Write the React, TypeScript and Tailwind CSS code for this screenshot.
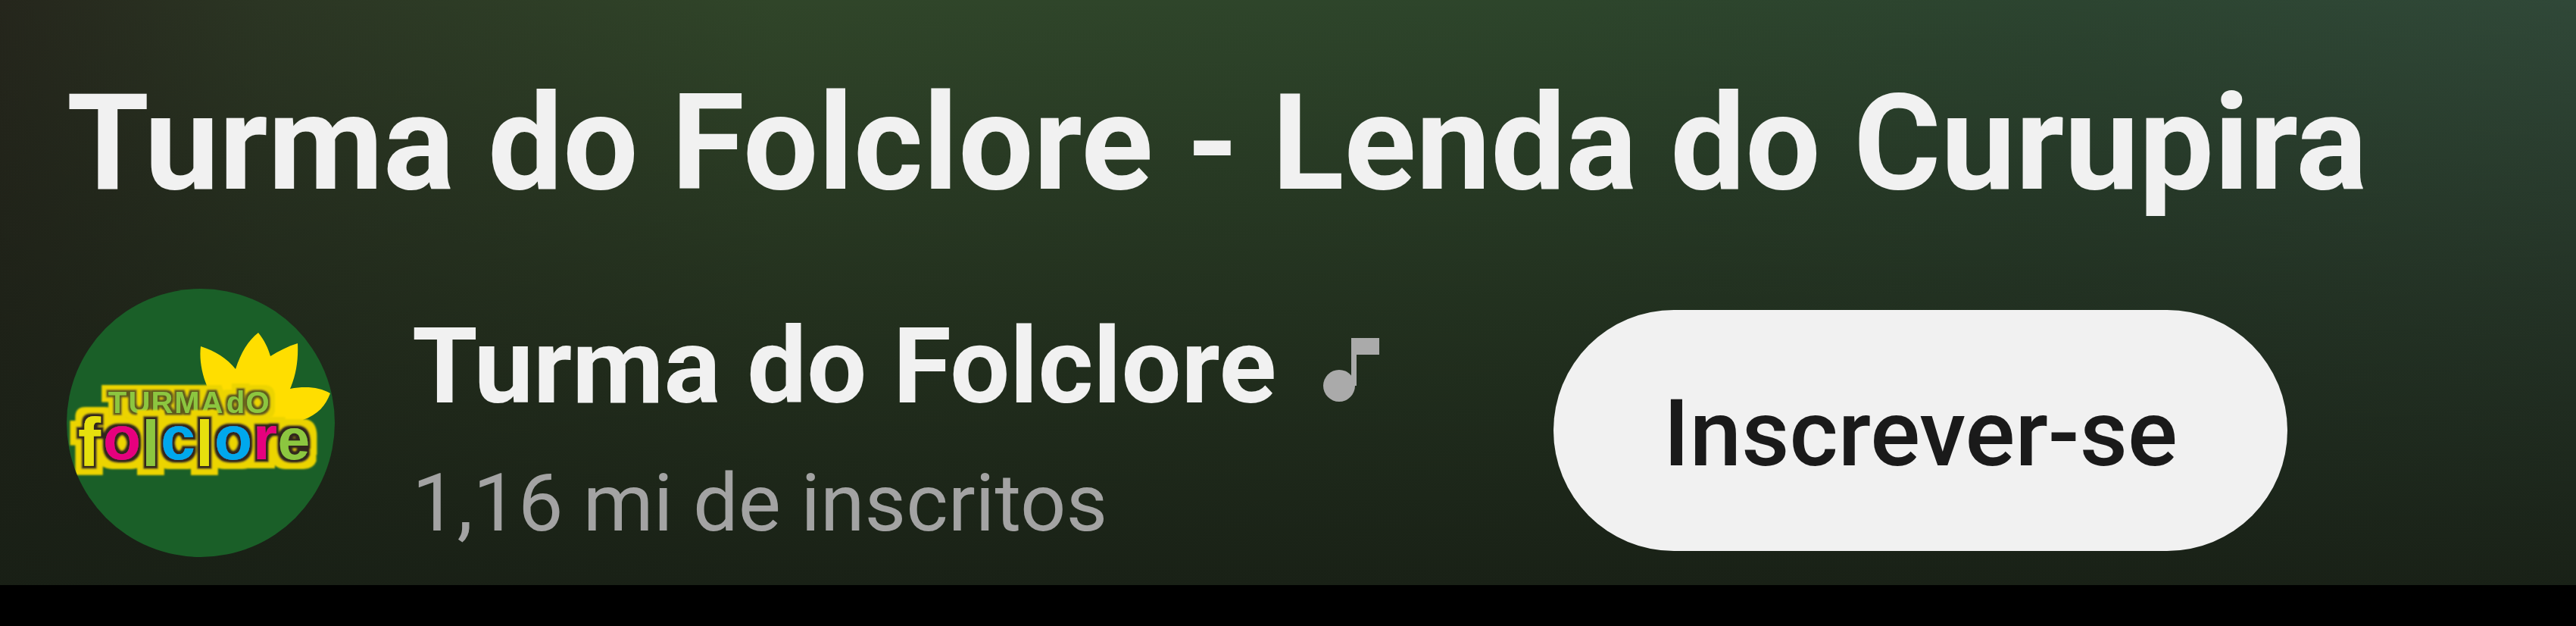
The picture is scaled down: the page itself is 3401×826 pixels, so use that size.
const bottomWord = [
  { c: "f", x: 30, y: 234, size: 90, fill: "#e6e010" },
  { c: "o", x: 73, y: 225, size: 82, fill: "#e6007e" },
  { c: "l", x: 111, y: 234, size: 86, fill: "#8cc63f" },
  { c: "c", x: 147, y: 225, size: 82, fill: "#00a8ec" },
  { c: "l", x: 182, y: 234, size: 86, fill: "#e6e010" },
  { c: "o", x: 220, y: 225, size: 82, fill: "#00a8ec" },
  { c: "r", x: 262, y: 225, size: 82, fill: "#e6007e" },
  { c: "e", x: 300, y: 225, size: 76, fill: "#8cc63f" },
];

function ChannelLogo() {
  return (
    <svg viewBox="0 0 354 354" className="size-[354px] shrink-0 rounded-full bg-[#1a5f28]" role="img" aria-label="Turma do Folclore">
      <defs>
        <filter id="outline" x="-10%" y="-30%" width="120%" height="160%">
          <feMorphology in="SourceAlpha" operator="dilate" radius="12" result="wide" />
          <feGaussianBlur in="wide" stdDeviation="1" result="wideSoft" />
          <feFlood floodColor="#ecd400" />
          <feComposite in2="wideSoft" operator="in" result="halo" />
          <feMorphology in="SourceAlpha" operator="dilate" radius="4" result="thin" />
          <feGaussianBlur in="thin" stdDeviation="1" result="thinSoft" />
          <feFlood floodColor="#33261a" />
          <feComposite in2="thinSoft" operator="in" result="edge" />
          <feMerge>
            <feMergeNode in="halo" />
            <feMergeNode in="edge" />
            <feMergeNode in="SourceGraphic" />
          </feMerge>
        </filter>
        <filter id="outlineThin" x="-10%" y="-50%" width="120%" height="200%">
          <feMorphology in="SourceAlpha" operator="dilate" radius="9" result="wide" />
          <feGaussianBlur in="wide" stdDeviation="1" result="wideSoft" />
          <feFlood floodColor="#ecd400" />
          <feComposite in2="wideSoft" operator="in" result="halo" />
          <feMorphology in="SourceAlpha" operator="dilate" radius="3" result="thin" />
          <feGaussianBlur in="thin" stdDeviation="1" result="thinSoft" />
          <feFlood floodColor="#5f5a1c" />
          <feComposite in2="thinSoft" operator="in" result="edge" />
          <feMerge>
            <feMergeNode in="halo" />
            <feMergeNode in="edge" />
            <feMergeNode in="SourceGraphic" />
          </feMerge>
        </filter>
      </defs>
      <path
        d="M177 76C196 82 212 92 223 106C230 84 240 68 253 58C261 68 266 78 269 89C280 82 292 76 305 72C306 94 303 114 295 132C316 128 334 130 348 138C342 154 332 166 312 173L300 206L120 206L110 172L186 130C178 112 175 92 177 76Z"
        fill="#ffde00"
      />
      <text
        x="67 96 126 159 192 210 223 252"
        y="164"
        fontFamily="Liberation Sans, sans-serif"
        fontWeight="700"
        fontSize="40"
        textAnchor="middle"
        fill="#8cc63f"
        filter="url(#outlineThin)"
      >
        TURMA dO
      </text>
      <text fontFamily="Liberation Sans, sans-serif" fontWeight="700" textAnchor="middle" filter="url(#outline)">
        {bottomWord.map((l) => (
          <tspan key={l.x} x={l.x} y={l.y} fontSize={l.size} fill={l.fill}>
            {l.c}
          </tspan>
        ))}
      </text>
    </svg>
  );
}

function MusicNote() {
  return (
    <svg viewBox="0 0 74 86" className="mt-3 h-[86px] w-[74px] shrink-0" fill="#aaaaaa" role="img" aria-label="Canal oficial de artista">
      <circle cx="21" cy="63" r="21" />
      <path d="M37 0H74V22H44V63H37Z" />
    </svg>
  );
}

export default function App() {
  return (
    <div className="min-h-screen bg-black font-['Roboto',sans-serif]">
      <main className="flex flex-col gap-[68px] bg-[linear-gradient(to_bottom,rgba(24,28,20,0)_0%,rgba(24,30,20,0.5)_50%,rgba(24,31,21,0.95)_100%),linear-gradient(to_right,#25261c_0%,#2b3523_10%,#304529_30%,#2d452b_60%,#2c4430_80%,#304838_100%)] px-[88px] pt-[69px] pb-[33px]">
        <h1 className="text-[176px] leading-[240px] font-bold text-[#f1f1f1]">Turma do Folclore - Lenda do Curupira</h1>
        <div className="flex items-center">
          <ChannelLogo />
          <div className="ml-[102px] flex flex-col">
            <div className="flex items-center gap-[62px]">
              <a href="#canal" className="text-[140px] leading-[212px] font-bold text-[#f1f1f1]">Turma do Folclore</a>
              <MusicNote />
            </div>
            <span className="text-[106px] leading-[150px] text-[#a3a3a3]">1,16 mi de inscritos</span>
          </div>
          <button type="button" className="mt-5 ml-[230px] h-[318px] rounded-full bg-[#f1f1f1] px-[145px] pt-2 text-[123px] font-medium text-[#1a1a1a]">
            Inscrever-se
          </button>
        </div>
      </main>
    </div>
  );
}
